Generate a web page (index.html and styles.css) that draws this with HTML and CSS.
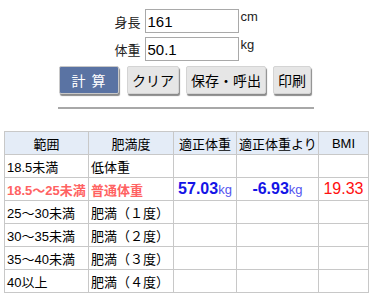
FILE: index.html
```html
<!DOCTYPE html>
<html lang="ja">
<head>
    <meta charset="UTF-8">
    <title>BMI計算</title>
    <link rel="stylesheet" href="styles.css">
</head>
<body>

<div class="panel">
    <div class="field">
        <label class="field-label" for="height">身長</label>
        <input class="field-input" id="height" type="text" value="161">
        <span class="field-unit">cm</span>
    </div>
    <div class="field">
        <label class="field-label" for="weight">体重</label>
        <input class="field-input" id="weight" type="text" value="50.1">
        <span class="field-unit">kg</span>
    </div>
    <div class="buttons">
        <button class="btn btn-calc">計 算</button>
        <button class="btn">クリア</button>
        <button class="btn">保存・呼出</button>
        <button class="btn">印刷</button>
    </div>
    <div class="rule"></div>
</div>

<table class="result">
    <colgroup>
        <col style="width: 84px">
        <col style="width: 85px">
        <col style="width: 63px">
        <col style="width: 82px">
        <col style="width: 50px">
    </colgroup>
    <tr>
        <th>範囲</th>
        <th>肥満度</th>
        <th>適正体重</th>
        <th>適正体重より</th>
        <th>BMI</th>
    </tr>
    <tr>
        <td>18.5未満</td>
        <td>低体重</td>
        <td></td><td></td><td></td>
    </tr>
    <tr class="current">
        <td>18.5～25未満</td>
        <td>普通体重</td>
        <td class="num"><span class="val">57.03</span><span class="unit">kg</span></td>
        <td class="num"><span class="val">-6.93</span><span class="unit">kg</span></td>
        <td class="num"><span class="bmi">19.33</span></td>
    </tr>
    <tr>
        <td>25～30未満</td>
        <td>肥満（１度）</td>
        <td></td><td></td><td></td>
    </tr>
    <tr>
        <td>30～35未満</td>
        <td>肥満（２度）</td>
        <td></td><td></td><td></td>
    </tr>
    <tr>
        <td>35～40未満</td>
        <td>肥満（３度）</td>
        <td></td><td></td><td></td>
    </tr>
    <tr>
        <td>40以上</td>
        <td>肥満（４度）</td>
        <td></td><td></td><td></td>
    </tr>
</table>

</body>
</html>
```

FILE: styles.css
```css
body {
    font-family: 'Liberation Sans', 'Noto Sans CJK JP', sans-serif;
    font-size: 13px;
    color: #000;
    background-color: #ffffff;
    margin: 0;
    padding: 0;
}
.panel {
    width: 256px;
    margin: 0 0 0 58px;
    padding-top: 9px;
}
.field {
    display: flex;
    justify-content: center;
    align-items: center;
    margin-bottom: 4px;
    padding-right: 1px;
}
.field-label {
    margin-right: 4px;
    color: #222;
}
.field-input {
    box-sizing: border-box;
    width: 94px;
    height: 24px;
    border: 1px solid #a9a9a9;
    padding: 1px 2px 0;
    font-family: 'Liberation Sans', sans-serif;
    font-size: 15px;
    color: #000;
}
.field-unit {
    align-self: flex-start;
    margin-left: 2px;
    width: 16px;
    line-height: 15px;
    color: #222;
}
.buttons {
    display: flex;
    gap: 7px;
    margin: 5px 0 0 1px;
}
.btn {
    box-sizing: border-box;
    height: 28px;
    padding: 0 4px;
    font-family: 'Liberation Sans', 'Noto Sans CJK JP', sans-serif;
    font-size: 14px;
    color: #000;
    background-color: #e6e6e6;
    border: 1px solid #d4d4d4;
    border-radius: 2px;
    box-shadow: 1px 2px 1px #8a8a8a;
    cursor: pointer;
}
.btn-calc {
    width: 60px;
    margin-right: 1px;
    background-color: #5a73a3;
    border-color: #c8c8c8;
    color: #fff;
    letter-spacing: 1px;
}
.rule {
    height: 2px;
    margin-top: 13px;
    background-color: #a8a8a8;
}
.result {
    margin: 22px 0 0 4px;
    border-collapse: collapse;
    table-layout: fixed;
    width: 365px;
}
.result th,
.result td {
    height: 22px;
    padding: 0 2px;
    border: 1px solid #c8c8c8;
    white-space: nowrap;
}
.result th {
    background-color: #e4ecf7;
    font-weight: normal;
    text-align: center;
}
.current td {
    color: #ff6262;
    font-weight: bold;
}
.result td.num {
    text-align: center;
    padding: 0;
}
.val {
    font-size: 16px;
    color: #1414e6;
}
.unit {
    font-size: 13px;
    font-weight: normal;
    color: #5454f0;
}
.bmi {
    font-size: 16px;
    font-weight: normal;
    color: #ff1010;
}
```
